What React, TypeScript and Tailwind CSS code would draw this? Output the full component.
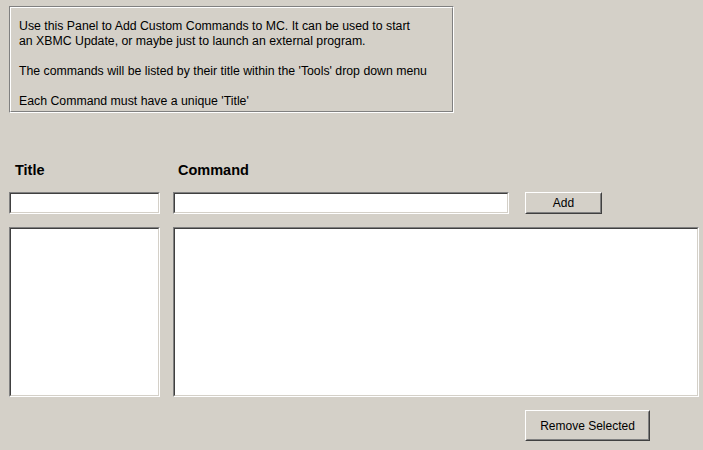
const font = { fontFamily: '"Liberation Sans", Arial, sans-serif' };

const Sunken = ({ className, children }: { className: string; children?: React.ReactNode }) => (
  <div className={`border border-t-[#808080] border-l-[#808080] border-b-white border-r-white ${className}`}>
    <div className="h-full w-full border border-t-[#404040] border-l-[#404040] border-b-[#d4d0c8] border-r-[#d4d0c8] bg-white">
      {children}
    </div>
  </div>
);

const Button = ({ className, label }: { className: string; label: string }) => (
  <button className={`border border-t-white border-l-white border-b-[#404040] border-r-[#404040] p-0 ${className}`}>
    <div className="flex h-full w-full items-center justify-center border border-t-[#d4d0c8] border-l-[#d4d0c8] border-b-[#808080] border-r-[#808080] text-[12px] text-black">
      {label}
    </div>
  </button>
);

export default function App() {
  return (
    <div className="flex h-[450px] w-[703px] flex-col overflow-hidden bg-[#d4d0c8] text-black" style={font}>
      {/* info panel */}
      <div className="ml-[9px] mt-[6px] h-[107px] w-[445px] border border-t-[#808080] border-l-[#808080] border-b-white border-r-white">
        <div className="h-full w-full border border-t-white border-l-white border-b-[#808080] border-r-[#808080] pl-[8px] pt-[11px] text-[12.3px] leading-[15px]">
          <p>Use this Panel to Add Custom Commands to MC. It can be used to start</p>
          <p>an XBMC Update, or maybe just to launch an external program.</p>
          <p>&nbsp;</p>
          <p>The commands will be listed by their title within the 'Tools' drop down menu</p>
          <p>&nbsp;</p>
          <p>Each Command must have a unique 'Title'</p>
        </div>
      </div>

      {/* labels */}
      <div className="mt-[49px] flex h-[16px] items-center text-[14.5px] font-bold leading-[16px]">
        <span className="ml-[15px] w-[163px]">Title</span>
        <span>Command</span>
      </div>

      {/* inputs */}
      <div className="mt-[14px] flex h-[22px]">
        <Sunken className="ml-[9px] w-[151px]" />
        <Sunken className="ml-[13px] w-[336px]" />
        <Button className="ml-[16px] w-[77px]" label="Add" />
      </div>

      {/* lists */}
      <div className="mt-[13px] flex h-[170px]">
        <Sunken className="ml-[9px] w-[151px]" />
        <Sunken className="ml-[13px] w-[526px]" />
      </div>

      <div className="mt-[13px] flex h-[31px]">
        <Button className="ml-[525px] w-[125px]" label="Remove Selected" />
      </div>
    </div>
  );
}
